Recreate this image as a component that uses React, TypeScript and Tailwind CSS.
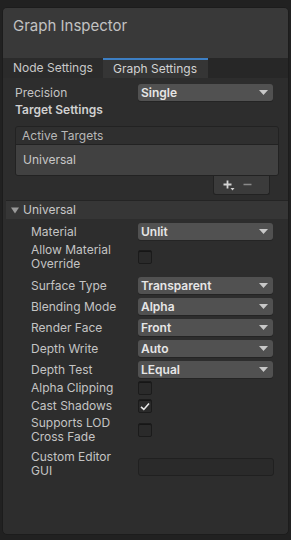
import React from "react";

const font = { fontFamily: "Inter, 'Noto Sans', sans-serif" };

function Arrow() {
  return (
    <svg width="9" height="5" viewBox="0 0 9 5" className="shrink-0">
      <path d="M0 0 H9 L4.5 5 Z" fill="#c8c8c8" />
    </svg>
  );
}

function Dropdown({ value }: { value: string }) {
  return (
    <div className="flex h-[17px] w-[135px] items-center justify-between rounded-[3px] bg-[#515151] pl-[3px] pr-[5px] shadow-[0_1px_0_#242424]">
      <span className="text-[12px] font-semibold leading-none text-[#e6e6e6]">{value}</span>
      <Arrow />
    </div>
  );
}

function Checkbox({ checked = false }: { checked?: boolean }) {
  return (
    <div className="flex h-[14px] w-[14px] items-center justify-center rounded-[2px] border border-[#1b1b1b] bg-[#2a2a2a] shadow-[inset_0_1px_0_#161616]">
      {checked && (
        <svg width="10" height="9" viewBox="0 0 10 9">
          <path d="M1 4.8 L3.8 7.4 L9 1.4" fill="none" stroke="#e8e8e8" strokeWidth="1.6" />
        </svg>
      )}
    </div>
  );
}

type Field =
  | { label: string; kind: "drop"; value: string }
  | { label: string; kind: "check"; checked?: boolean; two?: boolean }
  | { label: string; kind: "text" };

const fields: Field[] = [
  { label: "Material", kind: "drop", value: "Unlit" },
  { label: "Allow Material Override", kind: "check", two: true },
  { label: "Surface Type", kind: "drop", value: "Transparent" },
  { label: "Blending Mode", kind: "drop", value: "Alpha" },
  { label: "Render Face", kind: "drop", value: "Front" },
  { label: "Depth Write", kind: "drop", value: "Auto" },
  { label: "Depth Test", kind: "drop", value: "LEqual" },
  { label: "Alpha Clipping", kind: "check" },
  { label: "Cast Shadows", kind: "check", checked: true },
  { label: "Supports LOD Cross Fade", kind: "check", two: true },
  { label: "Custom Editor GUI", kind: "text" },
];

function FieldRow({ f }: { f: Field }) {
  const two = f.kind === "text" || (f.kind === "check" && f.two);
  return (
    <div className={`flex items-center pl-[28px] ${two ? "h-[28px]" : f.kind === "drop" ? "h-[17px]" : "h-[14px]"}`}>
      <div className={`w-[107px] pr-[4px] text-[12px] text-[#c4c4c4] ${two ? "leading-[14.5px]" : "leading-none"}`}>
        {f.label}
      </div>
      {f.kind === "drop" && <Dropdown value={f.value} />}
      {f.kind === "check" && <Checkbox checked={f.checked} />}
      {f.kind === "text" && (
        <div className="mt-[6px] h-[18px] w-[136px] rounded-[3px] border border-[#202020] bg-[#2a2a2a]" />
      )}
    </div>
  );
}

export default function App() {
  return (
    <div className="h-[540px] w-[291px] bg-[#212121] px-[2px] pb-[5px] pt-[7px]" style={font}>
      <div className="flex h-full flex-col overflow-hidden rounded-[5px] border border-[#1c1c1c] bg-[#2d2d2d]">
        {/* Header */}
        <div className="h-[50px] bg-[#393939] px-[10px] pt-[10px] text-[15px] leading-[16px] text-[#c2c2c2]">
          Graph Inspector
        </div>

        {/* Tabs */}
        <div className="flex h-[20px] bg-[#272727]">
          <div className="flex w-[100px] items-center bg-[#2b2b2b] pl-[10px] text-[12px] text-[#c8c8c8]">
            Node Settings
          </div>
          <div className="flex w-[105px] items-center border-t-2 border-[#3d7fc4] bg-[#353535] pl-[10px] text-[12px] text-[#d2d2d2]">
            Graph Settings
          </div>
        </div>

        {/* Precision */}
        <div className="mt-[6px] flex h-[17px] items-center pl-[12px]">
          <div className="w-[123px] text-[12px] leading-none text-[#c4c4c4]">Precision</div>
          <Dropdown value="Single" />
        </div>
        <div className="flex h-[18px] items-center pl-[12px] text-[12px] font-semibold text-[#d0d0d0]">
          Target Settings
        </div>

        {/* Active Targets list */}
        <div className="ml-[12px] mr-[9px] mt-[7px]">
          <div className="overflow-hidden rounded-[3px] border border-[#222222]">
            <div className="flex h-[18px] items-center border-b border-[#222222] bg-[#2f2f2f] pl-[6px] text-[12px] text-[#b8b8b8]">
              Active Targets
            </div>
            <div className="flex h-[30px] items-center bg-[#414141] pl-[7px] text-[12px] text-[#c8c8c8]">
              Universal
            </div>
          </div>
          <div className="flex justify-end pr-[9px]">
            <div className="flex h-[19px] w-[57px] items-center gap-[8px] rounded-b-[3px] border border-t-0 border-[#222222] bg-[#3b3b3b] pl-[9px]">
              <svg width="12" height="11" viewBox="0 0 12 11">
                <path d="M4.5 0.5 V8.5 M0.5 4.5 H8.5" stroke="#d4d4d4" strokeWidth="1.8" />
                <path d="M7.5 8 H11.5 L9.5 10.5 Z" fill="#d4d4d4" />
              </svg>
              <svg width="9" height="10" viewBox="0 0 9 10">
                <path d="M0.5 4.5 H8.5" stroke="#8a8a8a" strokeWidth="1.6" />
              </svg>
            </div>
          </div>
        </div>

        {/* Foldout */}
        <div className="ml-[3px] mt-[5px] flex h-[19px] items-center gap-[4px] border-t border-[#242424] bg-[#363636] pl-[5px] text-[12px] text-[#c8c8c8]">
          <svg width="8" height="7" viewBox="0 0 8 7">
            <path d="M0 0.5 H8 L4 6.5 Z" fill="#9a9a9a" />
          </svg>
          Universal
        </div>

        <div className="mt-[4px] flex flex-col">
          <FieldRow f={fields[0]} />
          <div className="mt-[3px]"><FieldRow f={fields[1]} /></div>
          <div className="mt-[6px] flex flex-col gap-[4px]">
            {fields.slice(2, 7).map((f) => (
              <FieldRow key={f.label} f={f} />
            ))}
          </div>
          <div className="mt-[3px]"><FieldRow f={fields[7]} /></div>
          <div className="mt-[4px]"><FieldRow f={fields[8]} /></div>
          <div className="mt-[3px]"><FieldRow f={fields[9]} /></div>
          <div className="mt-[6px]"><FieldRow f={fields[10]} /></div>
        </div>
      </div>
    </div>
  );
}
